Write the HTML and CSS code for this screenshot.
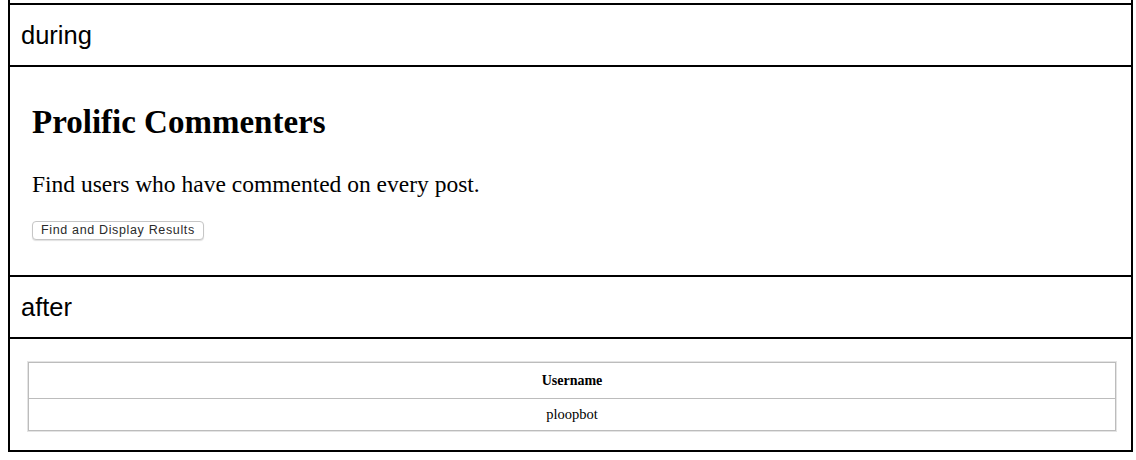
FILE: index.html
```html
<!DOCTYPE html>
<html lang="en">
<head>
<meta charset="utf-8">
<title>Prolific Commenters</title>
<link rel="stylesheet" href="styles.css">
</head>
<body>
<div class="frame">
  <div class="cut"></div>
  <div class="label">during</div>
  <div class="stage stage-during">
    <h1 class="title">Prolific Commenters</h1>
    <p class="lead">Find users who have commented on every post.</p>
    <button class="btn" type="button">Find and Display Results</button>
  </div>
  <div class="label">after</div>
  <div class="stage stage-after">
    <table class="results">
      <thead>
        <tr><th>Username</th></tr>
      </thead>
      <tbody>
        <tr><td>ploopbot</td></tr>
      </tbody>
    </table>
  </div>
</div>
</body>
</html>
```

FILE: styles.css
```css
html, body {
  margin: 0;
  padding: 0;
  background: #fff;
}

.frame {
  box-sizing: border-box;
  width: 1125px;
  margin-left: 8px;
  border: 2px solid #000;
  border-top: none;
  display: flex;
  flex-direction: column;
}

.cut {
  height: 3px;
  border-bottom: 2px solid #000;
}

.label {
  height: 60px;
  border-bottom: 2px solid #000;
  padding-left: 11px;
  font-family: "Liberation Sans", Arial, sans-serif;
  font-size: 25.5px;
  line-height: 60px;
  color: #000;
}

.stage {
  border-bottom: 2px solid #000;
  font-family: "Liberation Serif", "Times New Roman", serif;
  color: #000;
}

.stage:last-child {
  border-bottom: none;
}

.stage-during {
  height: 210px;
  box-sizing: border-box;
  padding: 36px 22px 0 22px;
  display: flex;
  flex-direction: column;
  align-items: flex-start;
}

.title {
  margin: 0;
  font-size: 33px;
  line-height: 38px;
  font-weight: bold;
}

.lead {
  margin: 29px 0 0 0;
  font-size: 23.5px;
  line-height: 28px;
}

.btn {
  margin-top: 23px;
  height: 19px;
  padding: 0 8px;
  box-sizing: border-box;
  background: #fff;
  border: 1px solid #c6c6c6;
  border-radius: 4px;
  box-shadow: 0 1px 1px rgba(0, 0, 0, 0.12);
  font-family: "Liberation Sans", Arial, sans-serif;
  font-size: 12.5px;
  letter-spacing: 0.65px;
  line-height: 17px;
  color: #2a2a2a;
}

.stage-after {
  height: 111px;
  box-sizing: border-box;
  padding: 23px 15px 0 18px;
}

.results {
  width: 100%;
  border-collapse: collapse;
  border: 1px solid #bcbcbc;
  box-shadow: 0 0 0 1px #e4e4e4;
  font-family: "Liberation Serif", "Times New Roman", serif;
  text-align: center;
}

.results th {
  height: 35px;
  padding: 0;
  font-size: 14px;
  font-weight: bold;
  border-bottom: 1px solid #bcbcbc;
}

.results td {
  height: 31px;
  padding: 0;
  font-size: 14.5px;
}
```
